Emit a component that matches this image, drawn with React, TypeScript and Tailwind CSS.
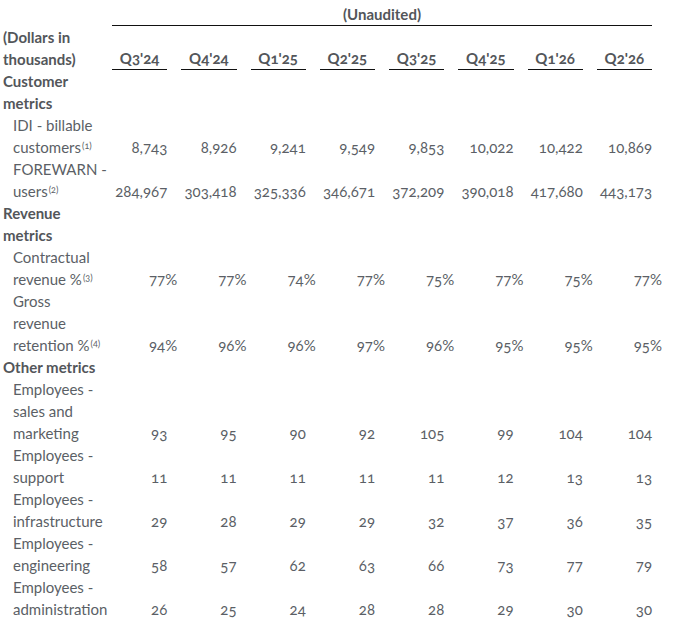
import React from 'react'

const QUARTERS = ["Q3'24", "Q4'24", "Q1'25", "Q2'25", "Q3'25", "Q4'25", "Q1'26", "Q2'26"]

type Row = {
  lines: string[]
  head?: boolean
  sup?: string
  vals?: string[]
  pct?: boolean
}

const ROWS: Row[] = [
  { lines: ['Customer', 'metrics'], head: true },
  {
    lines: ['IDI - billable', 'customers'],
    sup: '(1)',
    vals: ['8,743', '8,926', '9,241', '9,549', '9,853', '10,022', '10,422', '10,869'],
  },
  {
    lines: ['FOREWARN -', 'users'],
    sup: '(2)',
    vals: ['284,967', '303,418', '325,336', '346,671', '372,209', '390,018', '417,680', '443,173'],
  },
  { lines: ['Revenue', 'metrics'], head: true },
  {
    lines: ['Contractual', 'revenue %'],
    sup: '(3)',
    pct: true,
    vals: ['77', '77', '74', '77', '75', '77', '75', '77'],
  },
  {
    lines: ['Gross', 'revenue', 'retention %'],
    sup: '(4)',
    pct: true,
    vals: ['94', '96', '96', '97', '96', '95', '95', '95'],
  },
  { lines: ['Other metrics'], head: true },
  { lines: ['Employees -', 'sales and', 'marketing'], vals: ['93', '95', '90', '92', '105', '99', '104', '104'] },
  { lines: ['Employees -', 'support'], vals: ['11', '11', '11', '11', '11', '12', '13', '13'] },
  { lines: ['Employees -', 'infrastructure'], vals: ['29', '28', '29', '29', '32', '37', '36', '35'] },
  { lines: ['Employees -', 'engineering'], vals: ['58', '57', '62', '63', '66', '73', '77', '79'] },
  { lines: ['Employees -', 'administration'], vals: ['26', '25', '24', '28', '28', '29', '30', '30'] },
]

function Label({ row }: { row: Row }) {
  return (
    <div
      className={`whitespace-nowrap leading-[22px] ${
        row.head ? 'pl-[3px] font-bold text-[#53565a]' : 'pl-[13px] text-[#5b5f66]'
      }`}
    >
      {row.lines.map((l, i) => (
        <div key={i}>
          {l}
          {i === row.lines.length - 1 && row.sup && <sup className="ml-[1px] text-[9px]">{row.sup}</sup>}
        </div>
      ))}
    </div>
  )
}

export default function App() {
  return (
    <div className="w-[673px] bg-white pt-[3px] font-['Lato','Open_Sans',sans-serif] text-[15px] text-[#5b5f66] oldstyle-nums">
      <div className="grid grid-cols-[98px_repeat(8,55.25px)] gap-x-[14px]">
        {/* unaudited band */}
        <div />
        <div className="col-span-8 border-b border-[#111] text-center font-bold leading-[22px] text-[#53565a]">
          (Unaudited)
        </div>

        {/* column headers */}
        <div className="pl-[3px] font-bold leading-[22px] whitespace-nowrap text-[#53565a]">
          (Dollars in
          <br />
          thousands)
        </div>
        {QUARTERS.map((q) => (
          <div key={q} className="self-end border-b border-[#111] text-center font-bold leading-[22px] text-[#53565a]">
            {q}
          </div>
        ))}

        {ROWS.map((row, r) => (
          <React.Fragment key={r}>
            <Label row={row} />
            {row.vals
              ? row.vals.map((v, i) => (
                  <div key={i} className="self-end text-right leading-[22px] whitespace-nowrap">
                    {v}
                    {row.pct && <span className="-mr-[10px]">%</span>}
                  </div>
                ))
              : QUARTERS.map((q) => <div key={q} />)}
          </React.Fragment>
        ))}
      </div>
    </div>
  )
}
